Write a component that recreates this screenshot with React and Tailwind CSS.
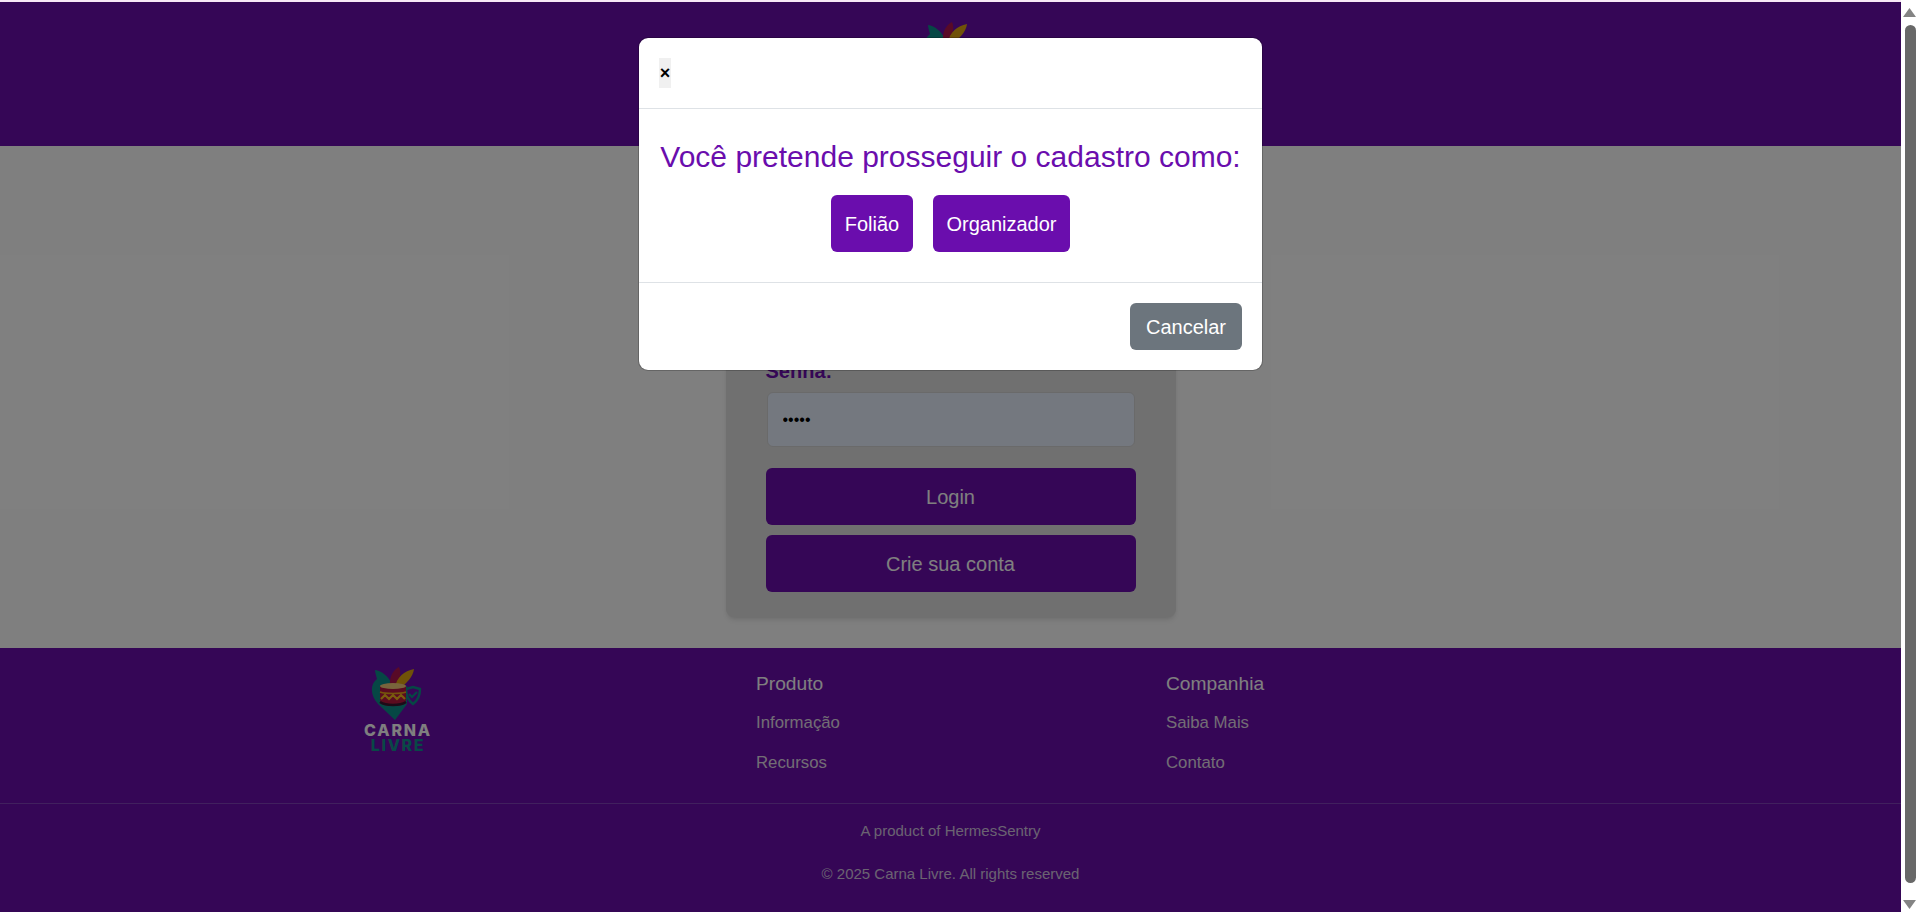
import React from "react";

const Logo = () => (
  <div className="flex w-[84px] flex-col items-center font-['Inter',sans-serif]">
    <svg width="84" height="62" viewBox="0 0 84 62" className="block">
      {/* heart with the teal feather on its top */}
      <path d="M20 8 C27 9 33 14 37 22 L52 24 L52 42 L40 58 L23 42 C15 33 15 22 22 17 C21 13 20 10 20 8 Z" fill="#0d8f8a" />
      {/* feathers */}
      <path d="M35 24 C34 15 38 8 44 5 C47 12 44 19 41 24 Z" fill="#b0154f" />
      <path d="M40 25 C42 15 49 9 59 7 C58 15 51 22 45 26 Z" fill="#e0a410" />
      {/* shield */}
      <path d="M51 27 L58 25 L65 27 C65 35 62 39 58 42 C54 39 51 35 51 27 Z" fill="#6a0dad" stroke="#0d8f8a" strokeWidth="2.4" />
      <path d="M54 32 L57 35 L62 30" fill="none" stroke="#0d8f8a" strokeWidth="2.2" />
      {/* drum */}
      <path d="M25 24 L25 38 C25 42 31 44 38 44 C45 44 51 42 51 38 L51 24 Z" fill="#b5173f" />
      <ellipse cx="38" cy="24" rx="13" ry="3" fill="#f2c878" />
      <path d="M25 30 C31 32 45 32 51 30" fill="none" stroke="#e8a818" strokeWidth="1.6" />
      <path d="M26 37 L30 33 L34 37 L38 33 L42 37 L46 33 L50 37" fill="none" stroke="#f5b81c" strokeWidth="2.2" />
      <path d="M25 40 C31 44 45 44 51 40" fill="none" stroke="#3a1430" strokeWidth="2.6" />
    </svg>
    <span className="h-[13px] pl-[2px] text-[16px] leading-[13px] font-extrabold tracking-[1.8px] text-white">CARNA</span>
    <span className="mt-[2px] h-[13px] pl-[2px] text-[16px] leading-[13px] font-extrabold tracking-[1.6px] text-[#12908e]">LIVRE</span>
  </div>
);

const Scrollbar = () => (
  <aside className="flex h-full w-[17px] flex-col items-center bg-white">
    <svg width="13" height="9" viewBox="0 0 13 9" className="mt-[8px] block">
      <path d="M6.5 0 L13 9 L0 9 Z" fill="#848484" />
    </svg>
    <div className="mt-[8px] ml-[1px] h-[858px] w-[11px] rounded-full bg-[#686868]" />
    <svg width="13" height="9" viewBox="0 0 13 9" className="mt-[17px] block">
      <path d="M0 0 L13 0 L6.5 9 Z" fill="#848484" />
    </svg>
  </aside>
);

const LoginCard = () => (
  <div className="w-[450px] rounded-lg bg-[#e0e0e0] px-[40px] pt-[30px] pb-[25px] shadow-md">
    <label className="block text-[20px] leading-[24px] font-bold text-[#6a0dad]">E-mail:</label>
    <input
      readOnly
      type="text"
      value="admin"
      className="mt-[8px] mb-[15px] block h-[55px] w-full rounded-md border border-[#d4d4d4] bg-[#e8f0fe] px-[15px] text-[16px]"
    />
    <label className="block text-[20px] leading-[24px] font-bold text-[#6a0dad]">Senha:</label>
    <input
      readOnly
      type="password"
      value="admin"
      className="mt-[9px] ml-[1px] block h-[55px] w-[368px] rounded-md border border-[#d4d4d4] bg-[#e8f0fe] px-[15px] text-[16px] text-black"
    />
    <button className="mt-[21px] block h-[57px] w-full rounded-md bg-[#6a0dad] text-[20px] text-white">Login</button>
    <button className="mt-[10px] block h-[57px] w-full rounded-md bg-[#6a0dad] text-[20px] text-white">Crie sua conta</button>
  </div>
);

const FooterColumn = ({ title, links }) => (
  <div className="pt-[25px]">
    <h3 className="text-[19.2px] leading-[22px] text-white">{title}</h3>
    <ul className="mt-[17px] flex flex-col gap-[18px]">
      {links.map((link) => (
        <li key={link} className="text-[16.8px] leading-[22px] text-[#e4dce9]">{link}</li>
      ))}
    </ul>
  </div>
);

const Footer = () => (
  <footer className="flex h-[264px] flex-col bg-[#6a0dad]">
    <div className="ml-[346px] grid h-[155px] w-[1230px] grid-cols-3">
      <div className="pt-[14px] pl-[9px]">
        <Logo />
      </div>
      <FooterColumn title="Produto" links={["Informação", "Recursos"]} />
      <FooterColumn title="Companhia" links={["Saiba Mais", "Contato"]} />
    </div>
    <div className="flex flex-col items-center border-t border-[#8240bd] pt-[16px] text-[15px] leading-[22px] text-[#d6c6e2]">
      <p>A product of HermesSentry</p>
      <p className="mt-[21px]">© 2025 Carna Livre. All rights reserved</p>
    </div>
  </footer>
);

const ChoiceModal = () => (
  <div className="absolute inset-0 flex justify-center bg-black/50 pt-[35px]">
    <div className="h-[334px] w-[625px] overflow-hidden rounded-[10px] border border-black/20 bg-white bg-clip-padding text-center">
      <div className="h-[71px] border-b border-[#dee2e6] pt-[20px] pl-[20px] text-left">
        <button className="block h-[30px] w-[12px] bg-[#f0f0f0] text-center text-[18px] leading-[30px] font-bold text-black">×</button>
      </div>
      <div className="h-[174px] border-b border-[#dee2e6] pt-[29px]">
        <h2 className="text-[30px] leading-[38px] text-[#6a0dad]">Você pretende prosseguir o cadastro como:</h2>
        <div className="mt-[19px] flex justify-center gap-[20px]">
          <button className="h-[57px] w-[82px] rounded-md bg-[#6a0dad] text-[20px] text-white">Folião</button>
          <button className="h-[57px] w-[137px] rounded-md bg-[#6a0dad] text-[20px] text-white">Organizador</button>
        </div>
      </div>
      <div className="flex justify-end pt-[20px] pr-[20px]">
        <button className="h-[47px] w-[112px] rounded-md bg-[#6c757d] text-[20px] text-white">Cancelar</button>
      </div>
    </div>
  </div>
);

export default function App() {
  return (
    <div className="flex h-[912px] w-full overflow-hidden font-['Liberation_Sans',Arial,sans-serif]">
      <div className="flex min-w-0 flex-1 flex-col">
        <div className="h-[2px] bg-[#f8e8f6]" />
        <div className="relative flex flex-1 flex-col">
          <header className="flex h-[144px] justify-center bg-[#6a0dad] pt-[15px] pr-[1px]">
            <Logo />
          </header>
          <main className="flex h-[502px] items-end justify-center bg-white pb-[31px]">
            <LoginCard />
          </main>
          <Footer />
          <ChoiceModal />
        </div>
      </div>
      <Scrollbar />
    </div>
  );
}
